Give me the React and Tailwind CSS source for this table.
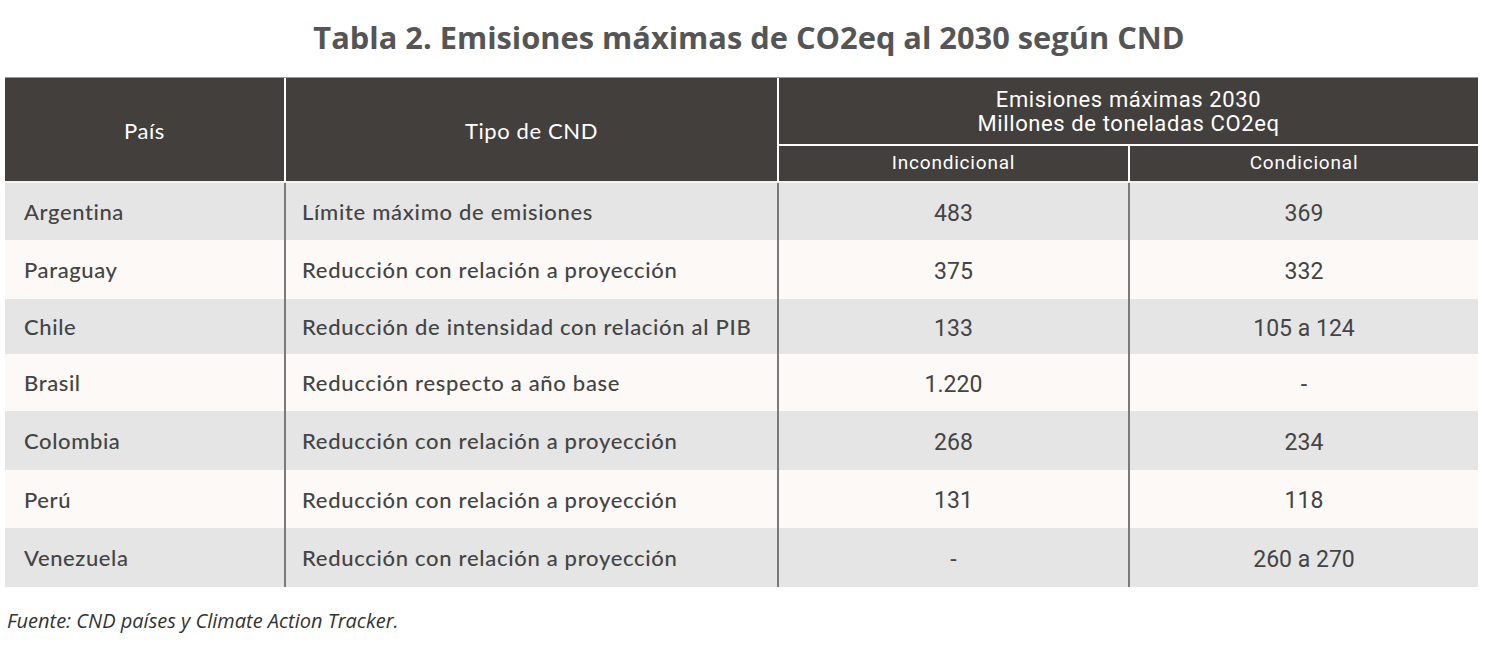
import React from 'react';

const rows = [
  { pais: 'Argentina', tipo: 'Límite máximo de emisiones', inc: '483', cond: '369' },
  { pais: 'Paraguay', tipo: 'Reducción con relación a proyección', inc: '375', cond: '332' },
  { pais: 'Chile', tipo: 'Reducción de intensidad con relación al PIB', inc: '133', cond: '105 a 124' },
  { pais: 'Brasil', tipo: 'Reducción respecto a año base', inc: '1.220', cond: '-' },
  { pais: 'Colombia', tipo: 'Reducción con relación a proyección', inc: '268', cond: '234' },
  { pais: 'Perú', tipo: 'Reducción con relación a proyección', inc: '131', cond: '118' },
  { pais: 'Venezuela', tipo: 'Reducción con relación a proyección', inc: '-', cond: '260 a 270' },
];

const heights = ['h-[57px]', 'h-[59px]', 'h-[55px]', 'h-[57px]', 'h-[59px]', 'h-[58px]', 'h-[59px]'];

export default function App() {
  return (
    <div className="w-[1486px] h-[645px] bg-white overflow-hidden font-['Lato',sans-serif]">
      <h1 className="pt-[14px] pl-[12px] h-[77px] text-center text-[30.8px] font-bold text-[#555555] font-['Open_Sans',sans-serif]">
        Tabla 2. Emisiones máximas de CO2eq al 2030 según CND
      </h1>

      <div className="ml-[5px] w-[1473px] border-t border-[#9a9a9a]">
        {/* header */}
        <div className="flex h-[103px] bg-[#423f3d] text-white">
          <div className="w-[279px] flex items-center justify-center text-[22px] tracking-[0.6px] pt-[2px]">País</div>
          <div className="w-[493px] border-l-2 border-white flex items-center justify-center text-[22px] tracking-[0.6px] pt-[2px]">Tipo de CND</div>
          <div className="flex-1 border-l-2 border-white flex flex-col">
            <div className="h-[66px] flex flex-col items-center justify-center leading-[24px] text-[22px] tracking-[0.6px] font-['Roboto',sans-serif] pt-[2px]">
              <span>Emisiones máximas 2030</span>
              <span>Millones de toneladas CO2eq</span>
            </div>
            <div className="flex h-[37px] border-t-2 border-white font-['Roboto',sans-serif] text-[19px] tracking-[0.8px]">
              <div className="w-[349px] flex items-center justify-center">Incondicional</div>
              <div className="flex-1 border-l-2 border-white flex items-center justify-center">Condicional</div>
            </div>
          </div>
        </div>

        <div className="h-[2px] bg-[#f2f2f2]" />

        {/* body */}
        {rows.map((r, i) => (
          <div
            key={r.pais}
            className={`flex ${heights[i]} text-[22px] tracking-[0.7px] font-medium text-[#444444] ${i % 2 === 0 ? 'bg-[#e5e5e5]' : 'bg-[#fcf9f6]'}`}
          >
            <div className="w-[279px] flex items-center pl-[19px] tracking-[0.6px]">{r.pais}</div>
            <div className="w-[493px] border-l-2 border-[#7a7a7a] flex items-center pl-[16px]">{r.tipo}</div>
            <div className="w-[351px] border-l-2 border-[#7a7a7a] flex items-center justify-center pt-[5px] font-['Roboto',sans-serif] font-normal text-[23px] tracking-normal">{r.inc}</div>
            <div className="flex-1 border-l-2 border-[#7a7a7a] flex items-center justify-center pt-[5px] font-['Roboto',sans-serif] font-normal text-[23px] tracking-normal">{r.cond}</div>
          </div>
        ))}
      </div>

      <p className="mt-[19px] ml-[7px] text-[20px] italic text-[#333333] font-['Open_Sans',sans-serif]">
        Fuente: CND países y Climate Action Tracker.
      </p>
    </div>
  );
}
